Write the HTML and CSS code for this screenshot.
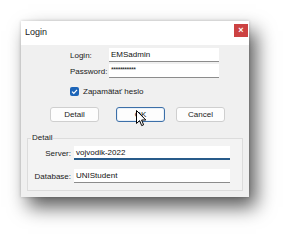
FILE: index.html
```html
<!DOCTYPE html>
<html lang="sk">
<head>
    <meta charset="UTF-8">
    <title>Login</title>
    <link rel="stylesheet" href="styles.css">
</head>
<body>
    <div class="dialog">
        <div class="titlebar">
            <span class="title">Login</span>
            <span class="close">×</span>
        </div>
        <div class="content">
            <div class="creds">
                <label>Login:</label>
                <div class="field">EMSadmin</div>
                <label>Password:</label>
                <div class="field pass">***********</div>
            </div>
            <div class="remember">
                <span class="check">
                    <svg width="9" height="9" viewBox="0 0 9 9"><path d="M2 4.6 L3.8 6.3 L7 2.8" fill="none" stroke="#fff" stroke-width="1.2"/></svg>
                </span>
                Zapamätať heslo
            </div>
            <div class="buttons">
                <button class="btn">Detail</button>
                <button class="btn default">OK
                    <svg class="cursor" width="11" height="17" viewBox="0 0 11 17"><path d="M0.5 0.5 L0.5 13.5 L3.6 10.6 L5.7 15.6 L7.6 14.8 L5.6 10 L9.8 10 Z" fill="#fff" stroke="#000" stroke-width="1"/></svg>
                </button>
                <button class="btn cancel">Cancel</button>
            </div>
            <fieldset class="group">
                <legend>Detail</legend>
                <div class="detail-rows">
                    <label>Server:</label>
                    <div class="field focused">vojvodik-2022</div>
                    <label>Database:</label>
                    <div class="field">UNIStudent</div>
                </div>
            </fieldset>
        </div>
    </div>
</body>
</html>
```

FILE: styles.css
```css
body {
    margin: 0;
    min-height: 240px;
    background-color: #fff;
    font-family: "Liberation Sans", Arial, sans-serif;
    font-size: 8px;
    color: #1a1a1a;
    overflow: hidden;
}
.dialog {
    margin: 21px 0 0 21px;
    width: 228px;
    height: 176px;
    background-color: #f0f0f0;
    box-shadow: 7px 10px 18px rgba(0, 0, 0, 0.65), 0 0 3px rgba(0, 0, 0, 0.2);
    display: flex;
    flex-direction: column;
}
.titlebar {
    height: 24px;
    background-color: #fff;
    display: flex;
    align-items: center;
    justify-content: space-between;
    padding: 0 1px 0 4px;
}
.title {
    font-size: 9px;
    color: #222;
    margin-top: -2px;
}
.close {
    width: 14px;
    height: 13px;
    margin-top: -5px;
    background-color: #cc4242;
    color: #fff;
    font-size: 9px;
    font-weight: bold;
    line-height: 13px;
    text-align: center;
}
.content {
    padding-top: 3px;
}
.creds {
    display: grid;
    grid-template-columns: 39px 110px;
    row-gap: 2px;
    margin-left: 49px;
    align-items: center;
}
.field {
    height: 14px;
    box-sizing: border-box;
    background-color: #fff;
    border-bottom: 1px solid #8c8c8c;
    padding: 0 2px;
    line-height: 13px;
    color: #111;
}
.pass {
    line-height: 11px;
    font-size: 7px;
    letter-spacing: -0.5px;
}
.remember {
    display: flex;
    align-items: center;
    margin: 8px 0 0 49px;
    height: 10px;
}
.check {
    width: 9px;
    height: 9px;
    border-radius: 2px;
    background-color: #1d65b8;
    margin-right: 4px;
    display: flex;
}
.buttons {
    display: flex;
    margin: 11px 0 0 29px;
}
.btn {
    position: relative;
    width: 49px;
    height: 15px;
    padding: 0;
    font-family: inherit;
    font-size: 8px;
    color: #1a1a1a;
    background-color: #fdfdfd;
    border: 1px solid #cfcfcf;
    border-radius: 3px;
}
.default {
    margin-left: 17px;
    border: 1px solid #3c6fa8;
    box-shadow: inset 0 0 0 1px #e8f0f8;
}
.cancel {
    margin-left: 11px;
}
.cursor {
    position: absolute;
    left: 19px;
    top: 2px;
}
.group {
    margin: 11px 0 0 6px;
    width: 216px;
    box-sizing: border-box;
    padding: 3px 0 7px 0;
    border: 1px solid #dcdcdc;
    background-color: #f3f3f3;
}
.group legend {
    padding: 0 1px;
    margin-left: 3px;
    line-height: 10px;
    color: #222;
}
.detail-rows {
    display: grid;
    grid-template-columns: 40px 156px;
    column-gap: 3px;
    row-gap: 9px;
    margin-left: 3px;
    align-items: center;
}
.detail-rows label {
    text-align: right;
}
.focused {
    border-bottom: 2px solid #285b8a;
}
```
